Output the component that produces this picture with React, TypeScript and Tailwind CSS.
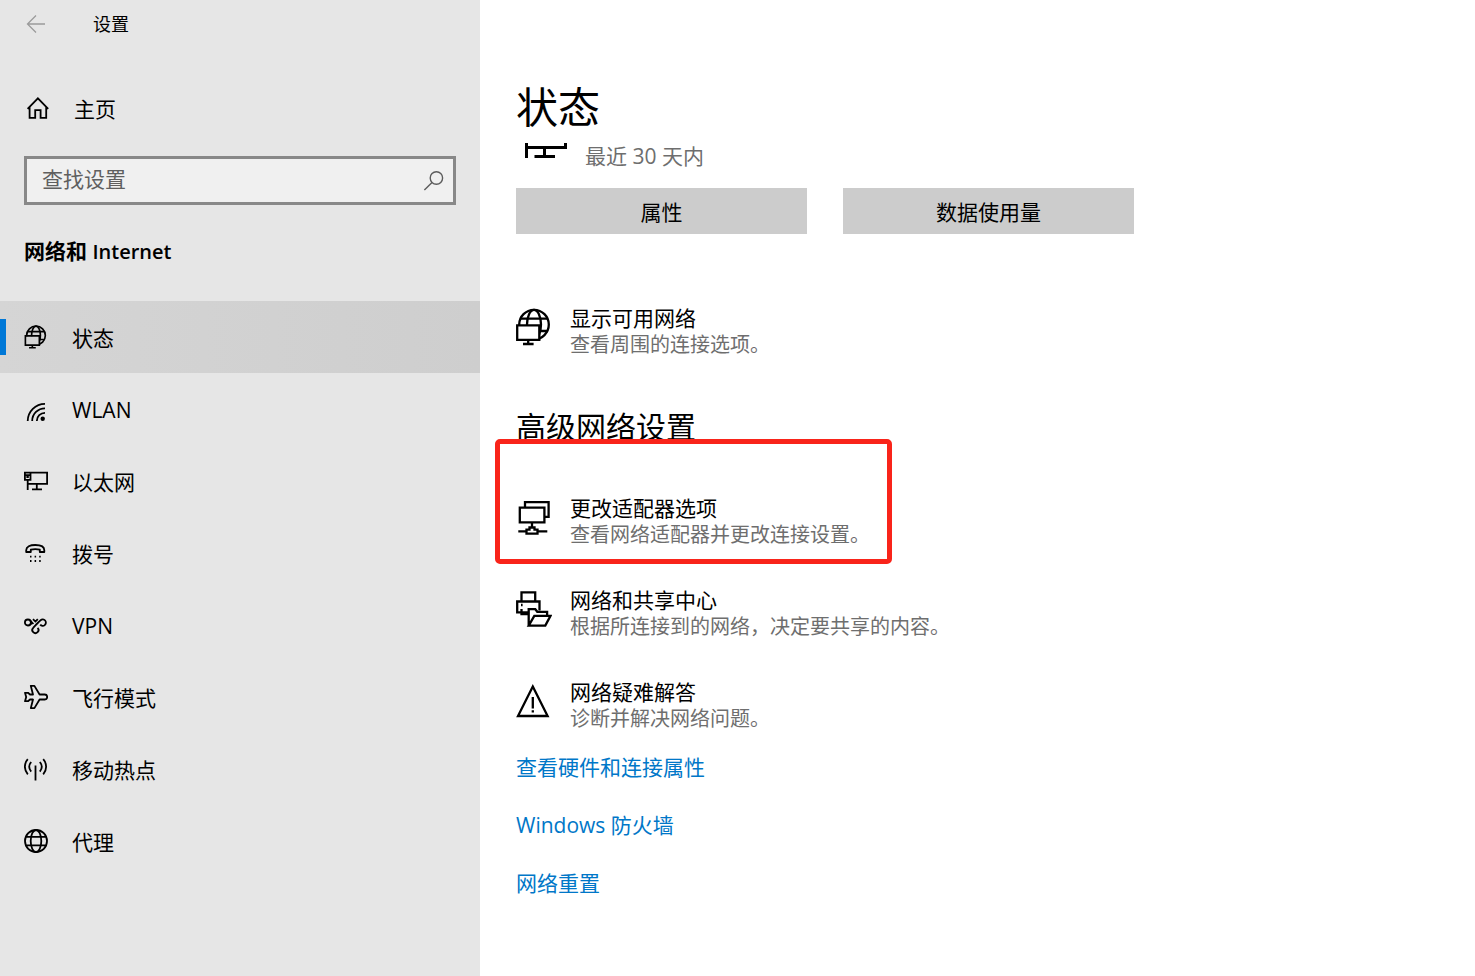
import type { ReactNode } from 'react';

type IconProps = { fill?: string };

// Small icons are drawn on a 24px grid, the large ones on a 36x42 grid
function SmallIcon({ children }: { children: ReactNode }) {
  return (
    <svg viewBox="0 0 24 24" className="w-6 h-6 shrink-0" fill="none" stroke="currentColor" strokeWidth="1.8" aria-hidden="true">
      {children}
    </svg>
  );
}

function LargeIcon({ children }: { children: ReactNode }) {
  return (
    <svg viewBox="0 0 36 42" className="w-9 h-[42px] shrink-0" fill="none" stroke="currentColor" strokeWidth="2.3" aria-hidden="true">
      {children}
    </svg>
  );
}

function GlobeMonitor({ fill = '#ffffff' }: IconProps) {
  return (
    <>
      <circle cx="18" cy="18.6" r="14.8" />
      <ellipse cx="18" cy="18.6" rx="7" ry="14.8" />
      <path d="M4.6 12.6h27M5 25h27" />
      <path d="M-1 20h24.3v14l-1 6H-1z" fill={fill} stroke="none" />
      <path d="M1.2 19.3h22.1v14.6H1.2zM12.2 34v4M7 38h10.6" />
    </>
  );
}

const navItems = [
  {
    label: '状态',
    icon: (
      <svg viewBox="0 2 36 38" className="w-6 h-6 shrink-0" fill="none" stroke="currentColor" strokeWidth="2.6" aria-hidden="true">
        <GlobeMonitor fill="#d4d4d4" />
      </svg>
    ),
  },
  {
    label: 'WLAN',
    icon: (
      <SmallIcon>
        <path d="M21 6.8A17.3 17.3 0 0 0 3.7 24M21 11.3A12.7 12.7 0 0 0 8.2 24M21 15.8A8.2 8.2 0 0 0 12.8 24" />
        <circle cx="18.7" cy="21.7" r="2.2" fill="currentColor" stroke="none" />
      </SmallIcon>
    ),
  },
  {
    label: '以太网',
    icon: (
      <SmallIcon>
        <path d="M6.5 3.7h16.6v11.1H4M.9 3.7h5.6v7.2H.9zM.9 6.2h5.6M2.4 8h2.4M3.7 10.9v10M12.8 14.8v5.5M8 20.3h10" />
      </SmallIcon>
    ),
  },
  {
    label: '拨号',
    icon: (
      <SmallIcon>
        <path d="M2.2 11V9.2C2.2 5.8 6 4 11.3 4s9 1.8 9 5.2V11h-4.5V8.7c-2.6-.7-6.4-.7-9 0V11z" strokeLinejoin="round" />
        <path d="M6 15.7h1.5M10.6 15.7h1.5M15.2 15.7h1.5M6 20h1.5M10.6 20h1.5M15.2 20h1.5" />
      </SmallIcon>
    ),
  },
  {
    label: 'VPN',
    icon: (
      <SmallIcon>
        <circle cx="3.9" cy="9.5" r="3" />
        <path d="M16.2 11.6A3.2 3.2 0 1 0 16.6 7.2C14.4 9 11 12.8 9.2 14.8A3.1 3.1 0 1 0 13.6 14.8" />
        <path d="M6.2 7.6l3.2 3.4M6.2 11.6l2-2M9 6.2l2.4 2.4 2.4-2.4" />
      </SmallIcon>
    ),
  },
  {
    label: '飞行模式',
    icon: (
      <SmallIcon>
        <path d="M6.8.9h3.6l5.2 8.6h5.2c3.2 0 3.2 5 0 5h-5.2l-5.2 8.6H6.8L9 14.5H6L4 16.2H1L2.2 12 1 7.8h3l2 1.7h3z" strokeLinejoin="round" />
      </SmallIcon>
    ),
  },
  {
    label: '移动热点',
    icon: (
      <SmallIcon>
        <path d="M11.5 8.5v15M3.8 2.2C-.1 6.6-.1 12.9 3.8 17.3M19.2 2.2c3.9 4.4 3.9 10.7 0 15.1M7.2 5c-2.5 3-2.5 6.6 0 9.6M15.8 5c2.5 3 2.5 6.6 0 9.6" />
      </SmallIcon>
    ),
  },
  {
    label: '代理',
    icon: (
      <SmallIcon>
        <circle cx="12" cy="12" r="11" />
        <ellipse cx="12" cy="12" rx="5.3" ry="11" />
        <path d="M1.8 7.8h20.4M1.8 16.3h20.4" />
      </SmallIcon>
    ),
  },
];

const links = ['查看硬件和连接属性', 'Windows 防火墙', '网络重置'];

function OptionRow({ icon, title, desc }: { icon: ReactNode; title: string; desc: string }) {
  return (
    <button type="button" className="flex items-start gap-[18px] text-left">
      <LargeIcon>{icon}</LargeIcon>
      <span className="flex flex-col">
        <span className="text-[21px] leading-6">{title}</span>
        <span className="text-[20px] leading-[30px] text-[#6e6e6e]">{desc}</span>
      </span>
    </button>
  );
}

export default function App() {
  return (
    <div className="flex min-h-screen bg-white text-black text-[21px] font-[Open_Sans,Noto_Sans_CJK_SC,sans-serif]">
      {/* Sidebar */}
      <aside className="w-[480px] shrink-0 bg-[#e6e6e6]">
        <header className="flex items-center h-12 px-6 gap-[45px]">
          <button type="button" aria-label="返回" className="text-[#9b9b9b]">
            <SmallIcon>
              <path d="M21 12H3.5M12 3.5L3.5 12l8.5 8.5" strokeWidth="1.3" />
            </SmallIcon>
          </button>
          <h1 className="text-[18px]">设置</h1>
        </header>

        <a href="#home" className="flex items-center h-12 mt-9 mx-6 gap-[22px]">
          <svg viewBox="0 0 28 24" className="w-7 h-6" fill="none" stroke="currentColor" strokeWidth="1.8" aria-hidden="true">
            <path d="M3.6 12.8L13.9 2.4l10.3 10.4M5.6 11v10.8h5.6v-7.6h5.4v7.6h5.6V11" />
          </svg>
          <span className="pt-1">主页</span>
        </a>

        <label className="flex items-center h-[49px] mt-6 mx-6 pl-[15px] pr-2 border-3 border-[#888888] bg-[#f0f0f0]">
          <input
            type="text"
            aria-label="查找设置"
            placeholder="查找设置"
            className="flex-1 min-w-0 pb-0.5 bg-transparent outline-none placeholder:text-[#5f5f5f]"
          />
          <svg viewBox="0 0 22 22" className="w-[22px] h-[22px]" fill="none" stroke="#5c5c5c" strokeWidth="1.4" aria-hidden="true">
            <circle cx="13.4" cy="8" r="6.2" />
            <path d="M9 12.4L1.4 20" />
          </svg>
        </label>

        <h2 className="h-12 mt-6 px-6 leading-[44px]">
          <span className="font-bold">网络和</span> <span className="text-[20px] font-semibold">Internet</span>
        </h2>

        <nav className="mt-6">
          {navItems.map((item, i) => (
            <a
              key={item.label}
              href={`#${item.label}`}
              className={`relative flex items-center h-[72px] px-6 gap-6 ${i === 0 ? 'bg-linear-to-r from-[#d5d5d5] to-[#cecece]' : ''}`}
            >
              {i === 0 && <span className="absolute left-0 top-[18px] w-1.5 h-9 bg-[#0078d7]"></span>}
              {item.icon}
              <span className="pt-1">{item.label}</span>
            </a>
          ))}
        </nav>
      </aside>

      {/* Content */}
      <main className="flex-1 px-9 pt-[79px] pb-16">
        <h2 className="text-[42px] leading-[56px]">状态</h2>

        <div className="flex items-start mt-2 pl-[9px] gap-[18px]">
          <svg viewBox="0 0 42 16" className="w-[42px] h-4" fill="none" stroke="currentColor" strokeWidth="3" aria-hidden="true">
            <path d="M1.5 0v15M1.5 4.5h39M40.5 0v6M19.5 4.5v9M9.5 13.5H30" />
          </svg>
          <p className="leading-[26px] text-[#6e6e6e]">最近 30 天内</p>
        </div>

        <div className="grid grid-cols-2 gap-9 max-w-[618px] mt-[19px]">
          <button type="button" className="h-[46px] pt-1 bg-[#cccccc]">属性</button>
          <button type="button" className="h-[46px] pt-1 bg-[#cccccc]">数据使用量</button>
        </div>

        <div className="mt-[72px]">
          <OptionRow icon={<GlobeMonitor />} title="显示可用网络" desc="查看周围的连接选项。" />
        </div>

        <h3 className="mt-[47px] text-[30px] leading-10">高级网络设置</h3>

        <div className="flex flex-col items-start gap-[38px] mt-[49px]">
          <div className="relative">
            <OptionRow
              icon={
                <path d="M3.8 11.7h24.6v14.7H3.8zM9 11.7V6.2h23.6v14.6H29M16 26.4v5.2M2.3 35.3h8.2M21.5 35.3h9.8M10.5 37.6v-4h3v-2.1h5v2.1h3v4z" />
              }
              title="更改适配器选项"
              desc="查看网络适配器并更改连接设置。"
            />
            <span className="absolute -top-[57px] -bottom-3.5 -left-[21px] w-[397px] border-5 border-[#f9241a] rounded-[5px] pointer-events-none"></span>
          </div>
          <OptionRow
            icon={
              <>
                <path d="M5.5 13V4.3h13.7V13M12 24.3H1.2V13.5h22.3v9M5.5 21v5.2H12M5 17h1.6" />
                <path d="M12.7 37.6V21.2h6.6l2 2.6h9.8v4.4M12.7 37.6l5.6-9.7h16.2l-5.2 9.7z" fill="#ffffff" />
              </>
            }
            title="网络和共享中心"
            desc="根据所连接到的网络，决定要共享的内容。"
          />
          <OptionRow
            icon={<path d="M16.8 6.6L31.6 36H2zM16.8 17v11.5M16.8 30.3v2.2" />}
            title="网络疑难解答"
            desc="诊断并解决网络问题。"
          />
        </div>

        <div className="flex flex-col items-start gap-7 mt-[18px]">
          {links.map(link => (
            <a key={link} href={`#${link}`} className="leading-[30px] text-[#0077c8]">{link}</a>
          ))}
        </div>
      </main>
    </div>
  );
}
